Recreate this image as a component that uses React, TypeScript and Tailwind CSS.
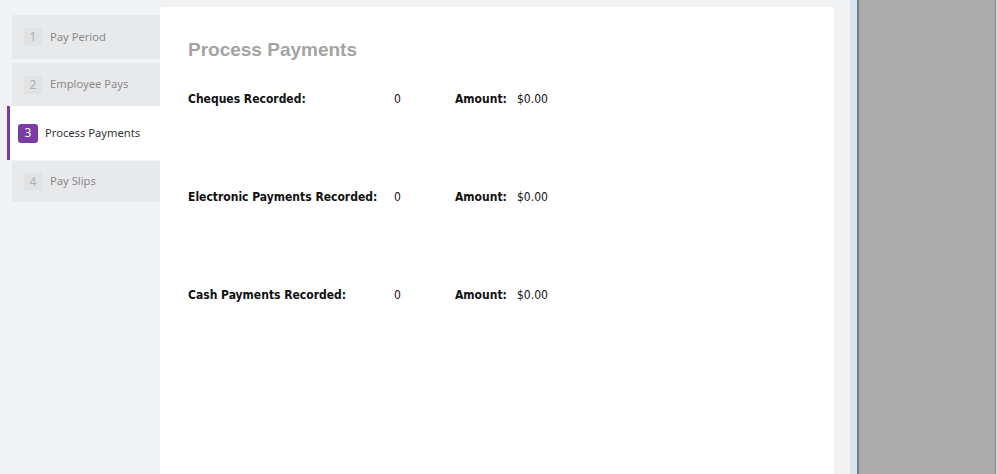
const steps = [
  { n: 1, label: "Pay Period" },
  { n: 2, label: "Employee Pays" },
  { n: 3, label: "Process Payments", active: true },
  { n: 4, label: "Pay Slips" },
];

const rows = [
  { label: "Cheques Recorded:", count: 0, amount: "$0.00" },
  { label: "Electronic Payments Recorded:", count: 0, amount: "$0.00" },
  { label: "Cash Payments Recorded:", count: 0, amount: "$0.00" },
];

export default function App() {
  return (
    <div className="flex h-[474px] w-[998px] overflow-hidden bg-[#f1f2f4]">
      {/* Steps */}
      <div className="flex w-[160px] shrink-0 flex-col pt-[15px] font-['Noto_Sans',sans-serif] text-[11.2px]">
        {steps.map((s) =>
          s.active ? (
            <div
              key={s.n}
              className="flex h-[54px] items-center gap-[7px] border-l-[3px] border-[#7b3aa6] bg-white pl-[8px] ml-[7px] text-[#333]"
            >
              <span className="flex h-[19px] w-[20px] items-center justify-center rounded-[3px] bg-[#7b3aa6] text-[12px] text-white">
                {s.n}
              </span>
              {s.label}
            </div>
          ) : (
            <div
              key={s.n}
              className={
                "ml-[12px] flex items-center gap-[8px] bg-[#e8e9eb] pl-[12px] text-[#8a8a8a] " +
                (s.n === 1 ? "h-[44px] mb-[4px]" : s.n === 2 ? "h-[43px]" : "mt-[1px] h-[41px]")
              }
            >
              <span className="flex h-[18px] w-[18px] items-center justify-center bg-[#e1e2e4] text-[12px] text-[#b0b0b0]">
                {s.n}
              </span>
              {s.label}
            </div>
          )
        )}
      </div>

      {/* Card */}
      <div className="mt-[7px] w-[674px] shrink-0 rounded-t-[4px] bg-white pl-[28px] pt-[31px]">
        <h1 className="font-['Liberation_Sans',Arial,sans-serif] text-[19px] font-bold leading-[24px] text-[#a3a3a3]">
          Process Payments
        </h1>
        <div className="mt-[28px] flex flex-col gap-[80px] font-['DejaVu_Sans_Condensed','Liberation_Sans',sans-serif] text-[12px] leading-[18px] text-[#111]">
          {rows.map((r) => (
            <div key={r.label} className="flex items-center">
              <span className="w-[206px] font-bold">{r.label}</span>
              <span className="w-[61px]">{r.count}</span>
              <span className="w-[62px] font-bold">Amount:</span>
              <span>{r.amount}</span>
            </div>
          ))}
        </div>
      </div>

      {/* Right gutter and pane */}
      <div className="w-[16px] shrink-0" />
      <div className="w-[7px] shrink-0 bg-[#d9e4f2]" />
      <div className="w-[2px] shrink-0 bg-[#7a7a7a]" />
      <div className="w-[136px] shrink-0 bg-[#ababab]" />
      <div className="w-[1px] shrink-0 bg-[#8c8c8c]" />
      <div className="flex-1 bg-[#d8d8d8]" />
    </div>
  );
}
